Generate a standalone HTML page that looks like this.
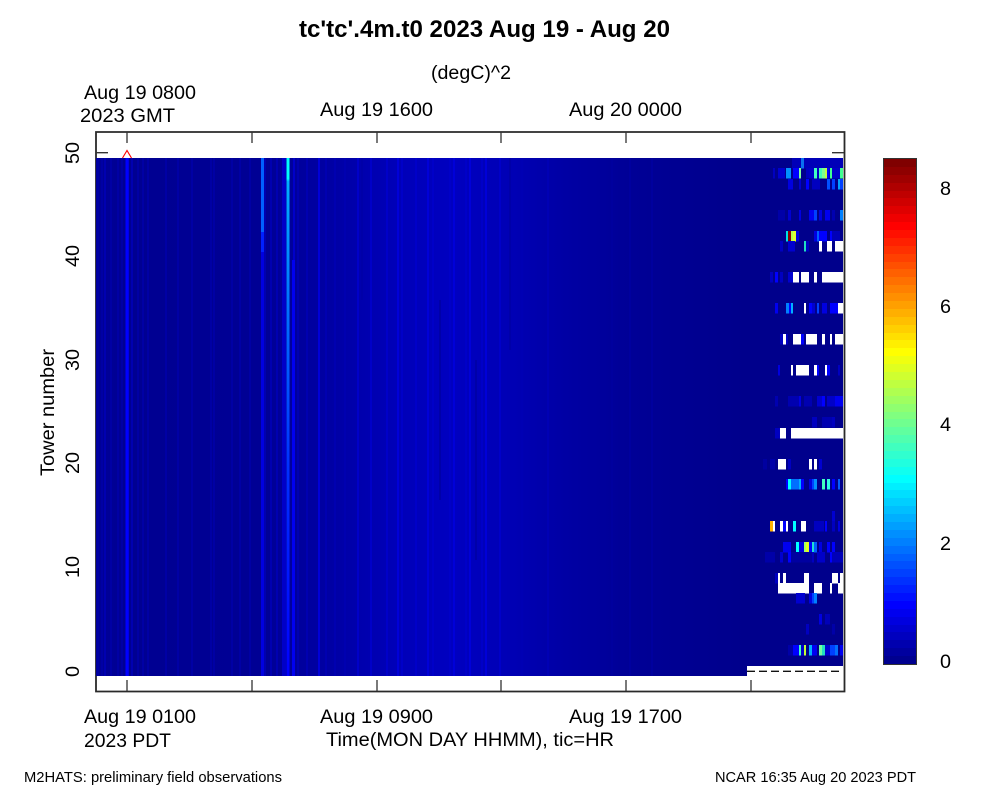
<!DOCTYPE html>
<html>
<head>
<meta charset="utf-8">
<style>
html,body{margin:0;padding:0;background:#fff}
body{width:1000px;height:800px;position:relative;overflow:hidden}
svg{position:absolute;left:0;top:0}
text{font-family:"Liberation Sans",sans-serif;fill:#000;font-size:19.8px}
.r rect{height:10.5px}
#cb{position:absolute;left:884px;top:159px;width:32px;height:505px;display:flex;flex-direction:column-reverse;outline:1px solid #333}
#cb i{flex:1;display:block}
</style>
</head>
<body>
<svg width="1000" height="800" viewBox="0 0 1000 800">
<defs>
<linearGradient id="bg" x1="96" x2="748" y1="0" y2="0" gradientUnits="userSpaceOnUse">
<stop offset="0" stop-color="#000098"/>
<stop offset=".05" stop-color="#000092"/>
<stop offset=".25" stop-color="#000094"/>
<stop offset=".36" stop-color="#0000a4"/>
<stop offset=".46" stop-color="#0000b8"/>
<stop offset=".55" stop-color="#0000c0"/>
<stop offset=".64" stop-color="#0000b4"/>
<stop offset=".72" stop-color="#0000a4"/>
<stop offset=".82" stop-color="#000096"/>
<stop offset="1" stop-color="#00008c"/>
</linearGradient>
<linearGradient id="s287" x1="0" x2="0" y1="158" y2="676" gradientUnits="userSpaceOnUse">
<stop offset="0" stop-color="#00ffff"/>
<stop offset=".04" stop-color="#00ffff"/>
<stop offset=".045" stop-color="#00b0ff"/>
<stop offset=".3" stop-color="#0070ff"/>
<stop offset=".6" stop-color="#0030ff"/>
<stop offset="1" stop-color="#0000ff"/>
</linearGradient>
</defs>
<path d="M96 132H844.5V691.5H96Z" fill="none" stroke="#2a2a2a" stroke-width="1.8"/>
<rect x="96" y="158" width="652" height="518" fill="url(#bg)"/>
<rect x="748" y="158" width="95" height="508" fill="#00008c"/>
<g fill="none" stroke-width="2.4" shape-rendering="crispEdges">
<path stroke="#0000a4" d="M98 158V676M102 158V676M111 158V676M118 158V676M122 158V676M138 158V676M143 158V676M148 158V676M166 158V676M178 158V676M192 158V676M211 158V676M214 158V676M232 158V676M240 158V676M250 158V676"/>
<path stroke="#0000b0" d="M105 158V676M132 158V676M265 158V676M271 158V676M277 158V676M298 158V676M307 158V676M326 158V676M335 158V676M345 158V676"/>
<path stroke="#0000c8" d="M128 158V676M283 158V676M285 158V676M294 158V676M358 158V676M371 158V676M387 158V676M402 158V676M416 158V676M433 158V676M450 158V676M466 158V676M482 158V676M500 158V676"/>
<path stroke="#0000b4" d="M522 158V676M548 158V676"/>
<path stroke="#00009e" d="M612 158V676M630 158V676M652 158V676"/>
<path stroke="#0000d8" d="M398 158V676M428 158V676M454 158V676M470 158V676M486 158V676M319 158V676"/>
<path stroke="#0000a8" d="M362 158V300M440 300V500M510 158V350M476 360V560"/>
<path stroke="#0000ff" stroke-width="3" d="M127 158V676"/>
<path stroke="#0060ff" stroke-width="3" d="M262.5 158V232"/>
<path stroke="#0020ff" stroke-width="3" d="M262.5 232V252"/>
<path stroke="#0000e0" stroke-width="3" d="M262.5 252V676"/>
<path stroke="url(#s287)" stroke-width="3" d="M288 158V676"/>
<path stroke="#0000f0" stroke-width="3" d="M293.5 260V676"/>
</g>
<g class="r" shape-rendering="crispEdges">
<g transform="translate(0,158)"><rect x="792" y="0" width="51" fill="#0000b8"/><rect x="801" y="0" width="3" fill="#0a70f0"/></g>
<g transform="translate(0,168)"><rect x="773" width="2" fill="#0000c0"/><rect x="778" width="7" fill="#0000d0"/><rect x="786" width="5" fill="#0090ff"/><rect x="793" width="6" fill="#0000ff"/><rect x="799" width="2" fill="#80ffa0"/><rect x="806" width="3" fill="#0000c0"/><rect x="809" width="34" fill="#0000c8"/><rect x="814" width="3" fill="#40ffc0"/><rect x="819" width="3" fill="#40ffb0"/><rect x="822" width="3" fill="#80ff90"/><rect x="825" width="2" fill="#c0ff40"/><rect x="827" width="2" fill="#0000ff"/><rect x="830" width="2" fill="#40ff90"/><rect x="840" width="3" fill="#40ff90"/></g>
<g transform="translate(0,179)"><rect x="788" width="5" fill="#0000e0"/><rect x="799" width="2" fill="#0000d0"/><rect x="806" width="3" fill="#0000ff"/><rect x="812" width="8" fill="#0000c0"/><rect x="827" width="3" fill="#0050ff"/><rect x="832" width="3" fill="#0040ff"/><rect x="838" width="2" fill="#00a0ff"/><rect x="840" width="3" fill="#0040ff"/></g>
<g transform="translate(0,210)"><rect x="778" width="7" fill="#0000a8"/><rect x="788" width="3" fill="#0000d0"/><rect x="799" width="2" fill="#0000e0"/><rect x="809" width="5" fill="#0000f0"/><rect x="814" width="3" fill="#0040ff"/><rect x="819" width="3" fill="#0000e0"/><rect x="825" width="5" fill="#0000f0"/><rect x="832" width="3" fill="#0000b0"/><rect x="840" width="3" fill="#0080ff"/></g>
<g transform="translate(0,231)"><rect x="786" width="2" fill="#00e0e0"/><rect x="788" width="3" fill="#8b0000"/><rect x="791" width="2" fill="#b0ff50"/><rect x="793" width="3" fill="#e0ff30"/><rect x="796" width="3" fill="#0000e0"/><rect x="814" width="3" fill="#0000e0"/><rect x="817" width="2" fill="#0060ff"/><rect x="819" width="8" fill="#0000ff"/><rect x="830" width="2" fill="#0000ff"/><rect x="832" width="8" fill="#0000b8"/></g>
<g transform="translate(0,241)"><rect x="780" width="3" fill="#0000c0"/><rect x="788" width="7" fill="#0000d0"/><rect x="804" width="2" fill="#20e0c0"/><rect x="806" width="3" fill="#0000c0"/><rect x="819" width="3" fill="#fff"/><rect x="827" width="5" fill="#fff"/><rect x="835" width="8" fill="#fff"/></g>
<g transform="translate(0,272)"><rect x="770" width="3" fill="#0000c0"/><rect x="775" width="3" fill="#0000ff"/><rect x="780" width="3" fill="#0000c0"/><rect x="788" width="5" fill="#0000d0"/><rect x="793" width="6" fill="#fff"/><rect x="801" width="8" fill="#fff"/><rect x="814" width="3" fill="#fff"/><rect x="822" width="21" fill="#fff"/></g>
<g transform="translate(0,303)"><rect x="775" width="3" fill="#0000f0"/><rect x="786" width="3" fill="#0080ff"/><rect x="789" width="2" fill="#0000ff"/><rect x="791" width="2" fill="#00b0ff"/><rect x="804" width="2" fill="#fff"/><rect x="809" width="3" fill="#0000ff"/><rect x="812" width="3" fill="#0000d0"/><rect x="817" width="2" fill="#0040ff"/><rect x="822" width="5" fill="#0000e0"/><rect x="830" width="8" fill="#0000ff"/><rect x="838" width="5" fill="#fff"/></g>
<g transform="translate(0,334)"><rect x="780" width="3" fill="#0000c0"/><rect x="783" width="3" fill="#fff"/><rect x="786" width="2" fill="#0000c0"/><rect x="793" width="8" fill="#fff"/><rect x="801" width="3" fill="#0000ff"/><rect x="806" width="11" fill="#fff"/><rect x="822" width="3" fill="#fff"/><rect x="830" width="2" fill="#fff"/><rect x="835" width="8" fill="#fff"/></g>
<g transform="translate(0,365)"><rect x="778" width="2" fill="#0000e0"/><rect x="791" width="2" fill="#fff"/><rect x="796" width="13" fill="#fff"/><rect x="814" width="3" fill="#fff"/><rect x="817" width="2" fill="#0000ff"/><rect x="825" width="2" fill="#fff"/><rect x="827" width="3" fill="#0000ff"/><rect x="838" width="2" fill="#0000c0"/></g>
<g transform="translate(0,396)"><rect x="775" width="3" fill="#0000b0"/><rect x="788" width="11" fill="#0000b0"/><rect x="799" width="2" fill="#0000e0"/><rect x="804" width="8" fill="#0000b0"/><rect x="817" width="5" fill="#0000d0"/><rect x="822" width="3" fill="#0000ff"/><rect x="827" width="8" fill="#0000c8"/><rect x="835" width="8" fill="#0000f0"/></g>
<g transform="translate(0,417)"><rect x="812" width="5" fill="#0000c0"/><rect x="822" width="10" fill="#0000b0"/><rect x="832" width="3" fill="#0000c0"/></g>
<g transform="translate(0,428)"><rect x="775" width="5" fill="#0000c0"/><rect x="780" width="6" fill="#fff"/><rect x="791" width="52" fill="#fff"/></g>
<g transform="translate(0,459)"><rect x="763" width="4" fill="#0000a0"/><rect x="770" width="5" fill="#0000a8"/><rect x="778" width="8" fill="#fff"/><rect x="788" width="3" fill="#0000c0"/><rect x="809" width="3" fill="#fff"/><rect x="814" width="3" fill="#fff"/><rect x="819" width="3" fill="#0000d0"/></g>
<g transform="translate(0,479)"><rect x="786" width="2" fill="#0000ff"/><rect x="788" width="3" fill="#00ffff"/><rect x="791" width="8" fill="#0070ff"/><rect x="799" width="2" fill="#00b0ff"/><rect x="801" width="3" fill="#0000ff"/><rect x="809" width="3" fill="#0000e0"/><rect x="812" width="2" fill="#0040ff"/><rect x="814" width="3" fill="#0090ff"/><rect x="822" width="3" fill="#40ffc0"/><rect x="827" width="3" fill="#30ffe0"/><rect x="832" width="3" fill="#0000ff"/><rect x="838" width="2" fill="#0060ff"/></g>
<g transform="translate(0,511)"><rect x="832" width="3" fill="#0000d0"/></g>
<g transform="translate(0,521)"><rect x="770" width="3" fill="#ffb000"/><rect x="773" width="2" fill="#fff"/><rect x="780" width="3" fill="#fff"/><rect x="783" width="3" fill="#0000ff"/><rect x="786" width="2" fill="#fff"/><rect x="793" width="3" fill="#00ffff"/><rect x="801" width="5" fill="#fff"/><rect x="814" width="10" fill="#0000c0"/><rect x="825" width="2" fill="#0000ff"/><rect x="832" width="3" fill="#0000c0"/><rect x="838" width="2" fill="#0000e0"/></g>
<g transform="translate(0,542)"><rect x="783" width="8" fill="#0000f0"/><rect x="796" width="3" fill="#00ffff"/><rect x="799" width="5" fill="#0000e0"/><rect x="804" width="2" fill="#a0ff60"/><rect x="806" width="3" fill="#e0ff20"/><rect x="809" width="3" fill="#0000ff"/><rect x="812" width="2" fill="#20e0d0"/><rect x="814" width="3" fill="#0060ff"/><rect x="819" width="3" fill="#0000e0"/><rect x="827" width="3" fill="#0000ff"/><rect x="832" width="3" fill="#0000ff"/></g>
<g transform="translate(0,552)"><rect x="765" width="10" fill="#0000a8"/><rect x="780" width="3" fill="#0000d0"/><rect x="788" width="3" fill="#0000ff"/><rect x="791" width="21" fill="#0000a0"/><rect x="812" width="2" fill="#0000c0"/><rect x="817" width="8" fill="#0000c8"/><rect x="830" width="2" fill="#0000ff"/><rect x="832" width="11" fill="#0000b8"/></g>
<g transform="translate(0,573)"><rect x="775" width="3" fill="#0000c0"/><rect x="778" width="2" fill="#fff"/><rect x="783" width="3" fill="#fff"/><rect x="804" width="5" fill="#fff"/><rect x="832" width="6" fill="#fff"/><rect x="840" width="3" fill="#fff"/></g>
<g transform="translate(0,583)"><rect x="778" width="31" fill="#fff"/><rect x="814" width="8" fill="#fff"/><rect x="830" width="2" fill="#fff"/><rect x="838" width="5" fill="#fff"/></g>
<g transform="translate(0,593)"><rect x="796" width="9" fill="#0000d0"/><rect x="809" width="3" fill="#0000e0"/><rect x="812" width="2" fill="#0040ff"/><rect x="814" width="3" fill="#0080ff"/></g>
<g transform="translate(0,614)"><rect x="819" width="3" fill="#0000e0"/><rect x="825" width="5" fill="#0000b8"/></g>
<g transform="translate(0,624)"><rect x="806" width="3" fill="#0000c0"/><rect x="832" width="3" fill="#0000a8"/></g>
<g transform="translate(0,645)"><rect x="788" width="5" fill="#0000a8"/><rect x="793" width="6" fill="#0000ff"/><rect x="799" width="2" fill="#40ffc0"/><rect x="801" width="3" fill="#0000d0"/><rect x="804" width="2" fill="#c0ff30"/><rect x="809" width="3" fill="#00b0ff"/><rect x="812" width="5" fill="#0000f0"/><rect x="819" width="3" fill="#70ffa0"/><rect x="822" width="3" fill="#20e0c0"/><rect x="825" width="5" fill="#0000d0"/><rect x="830" width="5" fill="#0040ff"/><rect x="835" width="3" fill="#0070ff"/><rect x="840" width="3" fill="#0000f0"/></g>
</g>
<rect x="747" y="666" width="96" height="11" fill="#fff"/>
<path d="M747 671.3H843" stroke="#111" stroke-width="1.4" stroke-dasharray="8 4" fill="none"/>
<path d="M122.5 158L127 150.5L131.5 158" stroke="#f00" stroke-width="1.1" fill="none"/>
<g stroke="#333" stroke-width="1.3" fill="none">
<path d="M127 132V143M252 132V143M377 132V143M501 132V143M626 132V143M751 132V143"/>
<path d="M127 691V680M252 691V680M377 691V680M501 691V680M626 691V680M751 691V680"/>
<path d="M96 152.7H108M832 152.7H844"/>
</g>
<text x="299" y="37" textLength="371" lengthAdjust="spacingAndGlyphs" style="font-size:24px;font-weight:bold">tc'tc'.4m.t0 2023 Aug 19 - Aug 20</text>
<text x="431" y="79" textLength="80" lengthAdjust="spacingAndGlyphs">(degC)^2</text>
<text x="84" y="99" textLength="112" lengthAdjust="spacingAndGlyphs">Aug 19 0800</text>
<text x="80" y="122" textLength="95" lengthAdjust="spacingAndGlyphs">2023 GMT</text>
<text x="320" y="116" textLength="113" lengthAdjust="spacingAndGlyphs">Aug 19 1600</text>
<text x="569" y="116" textLength="113" lengthAdjust="spacingAndGlyphs">Aug 20 0000</text>
<text x="84" y="723" textLength="112" lengthAdjust="spacingAndGlyphs">Aug 19 0100</text>
<text x="320" y="723" textLength="113" lengthAdjust="spacingAndGlyphs">Aug 19 0900</text>
<text x="569" y="723" textLength="113" lengthAdjust="spacingAndGlyphs">Aug 19 1700</text>
<text x="84" y="747" textLength="87" lengthAdjust="spacingAndGlyphs">2023 PDT</text>
<text x="326" y="746" textLength="288" lengthAdjust="spacingAndGlyphs">Time(MON DAY HHMM), tic=HR</text>
<text x="24" y="782" textLength="258" lengthAdjust="spacingAndGlyphs" style="font-size:14.7px">M2HATS: preliminary field observations</text>
<text x="715" y="782" textLength="201" lengthAdjust="spacingAndGlyphs" style="font-size:14.7px">NCAR 16:35 Aug 20 2023 PDT</text>
<text transform="translate(54,476) rotate(-90)" textLength="127" lengthAdjust="spacingAndGlyphs">Tower number</text>
<text transform="translate(79,164) rotate(-90)">50</text>
<text transform="translate(79,267) rotate(-90)">40</text>
<text transform="translate(79,371) rotate(-90)">30</text>
<text transform="translate(79,474) rotate(-90)">20</text>
<text transform="translate(79,578) rotate(-90)">10</text>
<text transform="translate(79,677) rotate(-90)">0</text>
<text x="940" y="195">8</text>
<text x="940" y="313">6</text>
<text x="940" y="431">4</text>
<text x="940" y="550">2</text>
<text x="940" y="668">0</text>
</svg>
<div id="cb"><i style="background:#00008f"></i><i style="background:#00009f"></i><i style="background:#0000af"></i><i style="background:#0000bf"></i><i style="background:#0000cf"></i><i style="background:#0000df"></i><i style="background:#0000ef"></i><i style="background:#0000ff"></i><i style="background:#0010ff"></i><i style="background:#0020ff"></i><i style="background:#0030ff"></i><i style="background:#0040ff"></i><i style="background:#0050ff"></i><i style="background:#0060ff"></i><i style="background:#0070ff"></i><i style="background:#0080ff"></i><i style="background:#008fff"></i><i style="background:#009fff"></i><i style="background:#00afff"></i><i style="background:#00bfff"></i><i style="background:#00cfff"></i><i style="background:#00dfff"></i><i style="background:#00efff"></i><i style="background:#00ffff"></i><i style="background:#10ffef"></i><i style="background:#20ffdf"></i><i style="background:#30ffcf"></i><i style="background:#40ffbf"></i><i style="background:#50ffaf"></i><i style="background:#60ff9f"></i><i style="background:#70ff8f"></i><i style="background:#80ff80"></i><i style="background:#8fff70"></i><i style="background:#9fff60"></i><i style="background:#afff50"></i><i style="background:#bfff40"></i><i style="background:#cfff30"></i><i style="background:#dfff20"></i><i style="background:#efff10"></i><i style="background:#ffff00"></i><i style="background:#ffef00"></i><i style="background:#ffdf00"></i><i style="background:#ffcf00"></i><i style="background:#ffbf00"></i><i style="background:#ffaf00"></i><i style="background:#ff9f00"></i><i style="background:#ff8f00"></i><i style="background:#ff8000"></i><i style="background:#ff7000"></i><i style="background:#ff6000"></i><i style="background:#ff5000"></i><i style="background:#ff4000"></i><i style="background:#ff3000"></i><i style="background:#ff2000"></i><i style="background:#ff1000"></i><i style="background:#ff0000"></i><i style="background:#ef0000"></i><i style="background:#df0000"></i><i style="background:#cf0000"></i><i style="background:#bf0000"></i><i style="background:#af0000"></i><i style="background:#9f0000"></i><i style="background:#8f0000"></i><i style="background:#800000"></i></div>
</body>
</html>
